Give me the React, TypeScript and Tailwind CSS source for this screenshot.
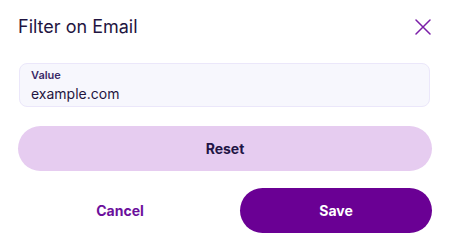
export default function App() {
  return (
    <div className="h-[252px] w-[450px] bg-white px-[18px] font-['Inter',sans-serif]">
      <div className="flex h-[63px] items-start justify-between pt-[16px]">
        <h2 className="text-[18px] leading-[22px] text-[#1f1541]">Filter on Email</h2>
        <button className="mt-[3px] mr-[1px] text-[#7b1fa8]">
          <svg width="16" height="16" viewBox="0 0 16 16" fill="none" stroke="currentColor" strokeWidth="1.5" strokeLinecap="round">
            <path d="M1 1 15 15M15 1 1 15" />
          </svg>
        </button>
      </div>

      <div className="ml-[1px] mr-[2px] h-[44px] rounded-lg border border-[#ebe7fa] bg-[#f7f7fd] px-[11px] pt-[5px]">
        <div className="text-[11px] font-semibold leading-[13px] text-[#3b2a69]">Value</div>
        <div className="mt-[3px] text-[14px] leading-[17px] text-[#1f1541]">example.com</div>
      </div>

      <button className="mt-[19px] flex h-[45px] w-full items-center justify-center rounded-full bg-[#e6ccf0] text-[14px] font-bold text-[#221545]">
        Reset
      </button>

      <div className="mt-[17px] flex items-center gap-[18px]">
        <button className="flex h-[45px] flex-1 items-center justify-center text-[14px] font-bold text-[#6c0f9c]">
          Cancel
        </button>
        <button className="flex h-[45px] w-[192px] items-center justify-center rounded-full bg-[#6a0094] text-[14px] font-bold text-white">
          Save
        </button>
      </div>
    </div>
  );
}
